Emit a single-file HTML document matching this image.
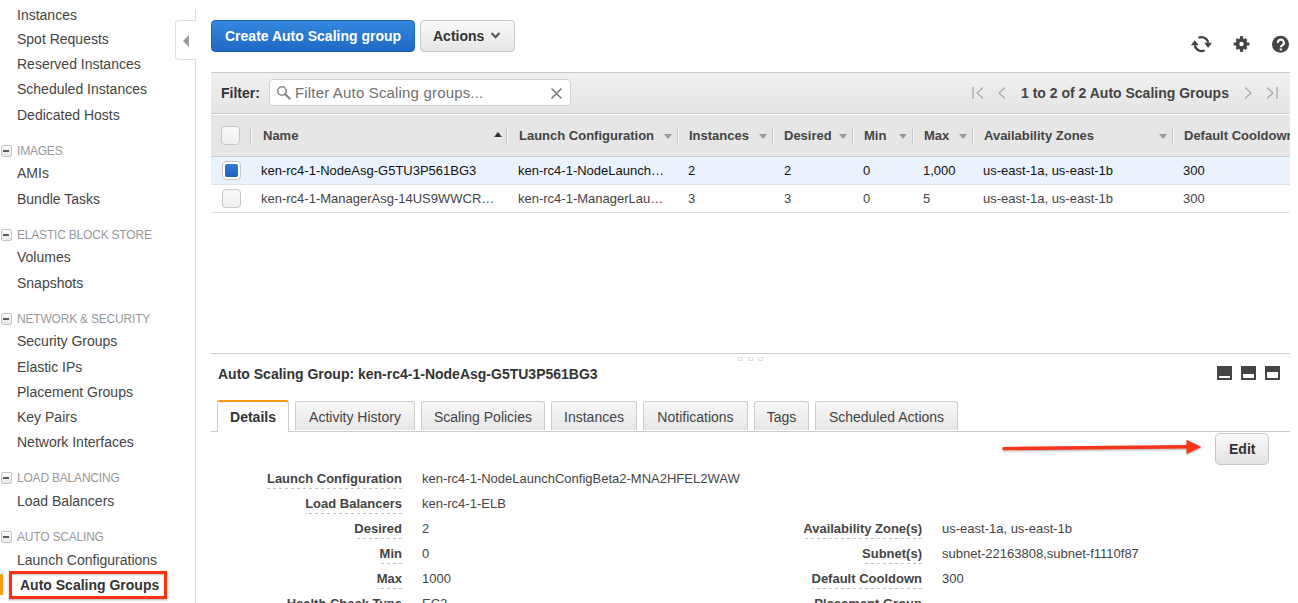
<!DOCTYPE html>
<html><head><meta charset="utf-8">
<style>
*{box-sizing:border-box;margin:0;padding:0}
html,body{width:1298px;height:603px;overflow:hidden;background:#fff}
body{position:relative;font-family:"Liberation Sans",sans-serif;color:#444;font-size:14px}
.a{position:absolute;white-space:nowrap}
.nav{font-size:14px;color:#444;left:17px;line-height:16px}
.sec{font-size:12px;letter-spacing:-0.2px;color:#999;left:17px;line-height:14px}
.mi{position:absolute;left:1px;width:11px;height:12px;border:1px solid #c4c4c4;border-radius:2px;background:linear-gradient(#fdfdfd,#e9e9e9)}
.mi:after{content:"";position:absolute;left:1px;top:3.5px;width:6px;height:2px;background:#5c5c5c}
.th{top:128px;font-size:13px;font-weight:bold;color:#444;line-height:16px}
.td{font-size:13px;color:#444;line-height:16px}
.dot{top:357px;width:5px;height:4px;border:1px solid #ddd;border-top-color:#e6e6e6;border-radius:2px 2px 0 0}
.tab{top:401px;height:29px;border:1px solid #cdcdcd;border-bottom:none;border-radius:3px 3px 0 0;background:linear-gradient(#f8f8f8,#e6e6e6);font-size:14px;color:#444;text-align:center;line-height:30px}
.tab.act{top:400px;height:32px;background:#fff;border-top:2px solid #f7981d;font-weight:bold;color:#333;line-height:30px;z-index:2}
.lbl{font-size:13px;font-weight:bold;color:#444;line-height:16px;padding-bottom:2px}
.lbl:after{content:"";position:absolute;left:0;right:0;bottom:0;height:1px;background:repeating-linear-gradient(to left,#c4c4c4 0 3px,transparent 3px 6px)}
.val{font-size:13px;color:#444;line-height:16px}
</style></head>
<body>
<!-- sidebar -->
<div class="a nav" style="top:7px">Instances</div>
<div class="a nav" style="top:31px">Spot Requests</div>
<div class="a nav" style="top:56px">Reserved Instances</div>
<div class="a nav" style="top:81px">Scheduled Instances</div>
<div class="a nav" style="top:107px">Dedicated Hosts</div>
<div class="mi" style="top:145px"></div><div class="a sec" style="top:144px">IMAGES</div>
<div class="a nav" style="top:165px">AMIs</div>
<div class="a nav" style="top:191px">Bundle Tasks</div>
<div class="mi" style="top:229px"></div><div class="a sec" style="top:228px">ELASTIC BLOCK STORE</div>
<div class="a nav" style="top:249px">Volumes</div>
<div class="a nav" style="top:275px">Snapshots</div>
<div class="mi" style="top:313px"></div><div class="a sec" style="top:312px">NETWORK &amp; SECURITY</div>
<div class="a nav" style="top:333px">Security Groups</div>
<div class="a nav" style="top:359px">Elastic IPs</div>
<div class="a nav" style="top:384px">Placement Groups</div>
<div class="a nav" style="top:409px">Key Pairs</div>
<div class="a nav" style="top:434px">Network Interfaces</div>
<div class="mi" style="top:472px"></div><div class="a sec" style="top:471px">LOAD BALANCING</div>
<div class="a nav" style="top:493px">Load Balancers</div>
<div class="mi" style="top:531px"></div><div class="a sec" style="top:530px">AUTO SCALING</div>
<div class="a nav" style="top:552px">Launch Configurations</div>
<div class="a" style="left:0;top:574px;width:3px;height:21px;background:#f99a14"></div>
<div class="a" style="left:9px;top:571px;width:158px;height:28px;border:3px solid #fb3313;box-shadow:0 1px 2px rgba(0,0,0,.3),inset 0 1px 2px rgba(0,0,0,.25)"></div>
<div class="a nav" style="top:577px;left:20px;font-weight:bold;color:#333">Auto Scaling Groups</div>
<!-- sidebar border + tab -->
<div class="a" style="left:195px;top:10px;width:1px;height:593px;background:#ddd"></div>
<div class="a" style="left:175px;top:20px;width:21px;height:40px;border:1px solid #ddd;border-right:none;border-radius:4px 0 0 4px;background:#fff"></div>
<div class="a" style="left:183px;top:34.5px;width:0;height:0;border-top:6px solid transparent;border-bottom:6px solid transparent;border-right:6px solid #999"></div>


<!-- top right icons -->
<svg class="a" style="left:1180px;top:28px" width="118" height="32" viewBox="1180 28 118 32">
<g fill="none" stroke="#444" stroke-width="2.3">
<path d="M1198.4 37.8 A6.8 6.8 0 0 1 1208.1 42.6"/>
<path d="M1204.6 50.3 A6.8 6.8 0 0 1 1194.8 45.3"/>
</g>
<g fill="#444">
<path d="M1204.2 42.8 L1212 42.8 L1208.1 47.9 Z"/>
<path d="M1190.9 45.2 L1198.7 45.2 L1194.8 40.2 Z"/>
</g>
<g fill="#444">
<circle cx="1241.5" cy="44" r="5.8"/>
<rect x="1240.0" y="36.1" width="3.0" height="4.9" transform="rotate(0 1241.5 44)"/><rect x="1240.15" y="36.9" width="2.7" height="4.1" transform="rotate(45 1241.5 44)"/><rect x="1240.0" y="36.1" width="3.0" height="4.9" transform="rotate(90 1241.5 44)"/><rect x="1240.15" y="36.9" width="2.7" height="4.1" transform="rotate(135 1241.5 44)"/><rect x="1240.0" y="36.1" width="3.0" height="4.9" transform="rotate(180 1241.5 44)"/><rect x="1240.15" y="36.9" width="2.7" height="4.1" transform="rotate(225 1241.5 44)"/><rect x="1240.0" y="36.1" width="3.0" height="4.9" transform="rotate(270 1241.5 44)"/><rect x="1240.15" y="36.9" width="2.7" height="4.1" transform="rotate(315 1241.5 44)"/>
</g>
<circle cx="1241.5" cy="44" r="2.2" fill="#fff"/>
<circle cx="1280.5" cy="44.3" r="8.5" fill="#444"/>
<path d="M1277.9 42.9 A3 3 0 1 1 1282.6 45.1 Q1280.9 45.9 1280.9 47.2" fill="none" stroke="#fff" stroke-width="2.1"/><rect x="1279.7" y="48.5" width="2.4" height="1.9" fill="#fff"/>
</svg>
<!-- top buttons -->
<div class="a" style="left:211px;top:20px;width:204px;height:32px;border:1px solid #1c62b9;border-radius:4px;background:linear-gradient(#3488de,#1d69c4)"></div>
<div class="a" style="left:225px;top:28px;font-size:14px;font-weight:bold;color:#fff;line-height:17px">Create Auto Scaling group</div>
<div class="a" style="left:420px;top:20px;width:95px;height:32px;border:1px solid #c6c6c6;border-radius:4px;background:linear-gradient(#f9f9f9,#e6e6e6)"></div>
<div class="a" style="left:433px;top:28px;font-size:14px;font-weight:bold;color:#333;line-height:17px">Actions</div>
<svg class="a" style="left:490px;top:31px" width="11" height="9" viewBox="0 0 11 9"><path d="M1.6 2 L5.5 6.3 L9.4 2" fill="none" stroke="#555" stroke-width="2.1"/></svg>

<!-- filter bar -->
<div class="a" style="left:211px;top:72px;width:1079px;height:42px;border-top:1px solid #c9c9c9;border-bottom:1px solid #c9c9c9;background:linear-gradient(#f0f0f0,#e4e4e4)"></div>
<div class="a" style="left:221px;top:85px;font-size:14px;font-weight:bold;color:#333;line-height:17px">Filter:</div>
<div class="a" style="left:269px;top:79px;width:302px;height:27px;border:1px solid #d2d2d2;border-radius:4px;background:#fff"></div>
<svg class="a" style="left:276px;top:85px" width="15" height="15" viewBox="0 0 15 15"><circle cx="6" cy="6" r="4.3" fill="none" stroke="#8a8a8a" stroke-width="1.6"/><path d="M9.2 9.2 L13.5 13.5" stroke="#8a8a8a" stroke-width="2.4" stroke-linecap="round"/></svg>
<div class="a" style="left:295px;top:84px;font-size:15px;letter-spacing:0.17px;color:#707070;line-height:18px">Filter Auto Scaling groups...</div>
<svg class="a" style="left:550px;top:87px" width="13" height="13" viewBox="0 0 13 13"><path d="M1.5 1.5 L11.5 11.5 M11.5 1.5 L1.5 11.5" stroke="#777" stroke-width="1.5"/></svg>
<!-- pagination -->
<svg class="a" style="left:972px;top:86px" width="13" height="14" viewBox="0 0 13 14"><path d="M1 1 V13 M11 1.5 L5 7 L11 12.5" fill="none" stroke="#aaa" stroke-width="1.3"/></svg>
<svg class="a" style="left:997px;top:86px" width="10" height="14" viewBox="0 0 10 14"><path d="M8 1.5 L2 7 L8 12.5" fill="none" stroke="#aaa" stroke-width="1.3"/></svg>
<div class="a" style="left:1021px;top:85px;font-size:14px;font-weight:bold;color:#444;line-height:17px">1 to 2 of 2 Auto Scaling Groups</div>
<svg class="a" style="left:1243px;top:86px" width="10" height="14" viewBox="0 0 10 14"><path d="M2 1.5 L8 7 L2 12.5" fill="none" stroke="#aaa" stroke-width="1.3"/></svg>
<svg class="a" style="left:1265px;top:86px" width="13" height="14" viewBox="0 0 13 14"><path d="M12 1 V13 M2 1.5 L8 7 L2 12.5" fill="none" stroke="#aaa" stroke-width="1.3"/></svg>
<!-- table header -->
<div class="a" style="left:211px;top:115px;width:1079px;height:42px;background:#e6e6e6;border-bottom:1px solid #cfcfcf"></div>
<div class="a" style="left:211px;top:157px;width:1079px;height:28px;background:#eaf2fc;border-bottom:1px solid #dde3ea"></div>
<div class="a" style="left:211px;top:185px;width:1079px;height:28px;background:#fff;border-bottom:1px solid #e2e2e2"></div>
<div class="a" style="left:221px;top:126px;width:19px;height:19px;border:1px solid #c6c6c6;border-radius:4px;background:linear-gradient(#fafafa,#efefef)"></div>
<div class="a" style="left:222px;top:161px;width:19px;height:19px;border:1px solid #c6c6c6;border-radius:4px;background:#fff"></div>
<div class="a" style="left:225px;top:164px;width:13px;height:13px;border-radius:2px;background:linear-gradient(#2f7fd6,#1a60bd)"></div>
<div class="a" style="left:222px;top:189px;width:19px;height:19px;border:1px solid #c6c6c6;border-radius:4px;background:linear-gradient(#fafafa,#f0f0f0)"></div>
<div class="a" style="left:250px;top:127px;width:2px;height:18px;border-left:1px solid #c8c8c8;border-right:1px solid #fafafa"></div>
<div class="a" style="left:506px;top:127px;width:2px;height:18px;border-left:1px solid #c8c8c8;border-right:1px solid #fafafa"></div>
<div class="a" style="left:677px;top:127px;width:2px;height:18px;border-left:1px solid #c8c8c8;border-right:1px solid #fafafa"></div>
<div class="a" style="left:772px;top:127px;width:2px;height:18px;border-left:1px solid #c8c8c8;border-right:1px solid #fafafa"></div>
<div class="a" style="left:852px;top:127px;width:2px;height:18px;border-left:1px solid #c8c8c8;border-right:1px solid #fafafa"></div>
<div class="a" style="left:912px;top:127px;width:2px;height:18px;border-left:1px solid #c8c8c8;border-right:1px solid #fafafa"></div>
<div class="a" style="left:972px;top:127px;width:2px;height:18px;border-left:1px solid #c8c8c8;border-right:1px solid #fafafa"></div>
<div class="a" style="left:1172px;top:127px;width:2px;height:18px;border-left:1px solid #c8c8c8;border-right:1px solid #fafafa"></div>
<div class="a th" style="left:263px">Name</div>
<div class="a th" style="left:519px">Launch Configuration</div>
<div class="a th" style="left:689px">Instances</div>
<div class="a th" style="left:784px">Desired</div>
<div class="a th" style="left:864px">Min</div>
<div class="a th" style="left:924px">Max</div>
<div class="a th" style="left:984px">Availability Zones</div>
<div class="a" style="left:1184px;top:115px;width:106px;height:40px;overflow:hidden"><div class="a th" style="left:0;top:13px">Default Cooldown</div></div>
<div class="a" style="left:494px;top:132px;width:0;height:0;border-left:4px solid transparent;border-right:4px solid transparent;border-bottom:5px solid #333"></div>
<div class="a" style="left:664px;top:134px;width:0;height:0;border-left:4px solid transparent;border-right:4px solid transparent;border-top:5px solid #999"></div>
<div class="a" style="left:759px;top:134px;width:0;height:0;border-left:4px solid transparent;border-right:4px solid transparent;border-top:5px solid #999"></div>
<div class="a" style="left:839px;top:134px;width:0;height:0;border-left:4px solid transparent;border-right:4px solid transparent;border-top:5px solid #999"></div>
<div class="a" style="left:899px;top:134px;width:0;height:0;border-left:4px solid transparent;border-right:4px solid transparent;border-top:5px solid #999"></div>
<div class="a" style="left:959px;top:134px;width:0;height:0;border-left:4px solid transparent;border-right:4px solid transparent;border-top:5px solid #999"></div>
<div class="a" style="left:1159px;top:134px;width:0;height:0;border-left:4px solid transparent;border-right:4px solid transparent;border-top:5px solid #999"></div>
<div class="a td" style="left:261px;top:163px;color:#111">ken-rc4-1-NodeAsg-G5TU3P561BG3</div>
<div class="a td" style="left:518px;top:163px;color:#111">ken-rc4-1-NodeLaunch…</div>
<div class="a td" style="left:688px;top:163px;color:#111">2</div>
<div class="a td" style="left:784px;top:163px;color:#111">2</div>
<div class="a td" style="left:863px;top:163px;color:#111">0</div>
<div class="a td" style="left:923px;top:163px;color:#111">1,000</div>
<div class="a td" style="left:983px;top:163px;color:#111">us-east-1a, us-east-1b</div>
<div class="a td" style="left:1183px;top:163px;color:#111">300</div>
<div class="a td" style="left:261px;top:191px">ken-rc4-1-ManagerAsg-14US9WWCR…</div>
<div class="a td" style="left:518px;top:191px">ken-rc4-1-ManagerLau…</div>
<div class="a td" style="left:688px;top:191px">3</div>
<div class="a td" style="left:784px;top:191px">3</div>
<div class="a td" style="left:863px;top:191px">0</div>
<div class="a td" style="left:923px;top:191px">5</div>
<div class="a td" style="left:983px;top:191px">us-east-1a, us-east-1b</div>
<div class="a td" style="left:1183px;top:191px">300</div>

<!-- splitter -->
<div class="a" style="left:211px;top:353px;width:1079px;height:1px;background:#cfcfcf"></div>
<div class="a dot" style="left:738px"></div><div class="a dot" style="left:748px"></div><div class="a dot" style="left:758px"></div>
<div class="a" style="left:218px;top:366px;font-size:14px;font-weight:bold;color:#333;line-height:17px">Auto Scaling Group: ken-rc4-1-NodeAsg-G5TU3P561BG3</div>
<!-- pane icons -->
<div class="a" style="left:1217px;top:366px;width:15px;height:14px;background:#444"><div class="a" style="left:2px;top:10px;width:11px;height:2px;background:#fff"></div></div>
<div class="a" style="left:1241px;top:366px;width:15px;height:14px;background:#444"><div class="a" style="left:2px;top:8px;width:11px;height:4px;background:#fff"></div></div>
<div class="a" style="left:1265px;top:366px;width:15px;height:14px;background:#444"><div class="a" style="left:2px;top:6px;width:11px;height:6px;background:#fff"></div></div>
<!-- tabs -->
<div class="a" style="left:211px;top:431px;width:1079px;height:1px;background:#cacaca"></div>
<div class="a tab act" style="left:217px;width:72px">Details</div>
<div class="a tab" style="left:295px;width:120px">Activity History</div>
<div class="a tab" style="left:421px;width:124px">Scaling Policies</div>
<div class="a tab" style="left:551px;width:86px">Instances</div>
<div class="a tab" style="left:643px;width:105px">Notifications</div>
<div class="a tab" style="left:754px;width:55px">Tags</div>
<div class="a tab" style="left:815px;width:143px">Scheduled Actions</div>
<!-- edit + arrow -->
<div class="a" style="left:1215px;top:433px;width:54px;height:32px;border:1px solid #c6c6c6;border-radius:5px;background:linear-gradient(#f9f9f9,#e4e4e4)"></div>
<div class="a" style="left:1229px;top:441px;font-size:14px;font-weight:bold;color:#333;line-height:17px">Edit</div>
<svg class="a" style="left:995px;top:435px" width="215" height="25" viewBox="995 435 215 25">
<defs><filter id="sh" x="-5%" y="-50%" width="110%" height="200%"><feDropShadow dx="0" dy="1" stdDeviation="0.8" flood-color="#000" flood-opacity="0.35"/></filter></defs>
<g filter="url(#sh)"><path d="M1004 448.6 L1188 446.8" stroke="#f5341b" stroke-width="3.4" stroke-linecap="round"/><path d="M1186.5 439.8 L1201.5 447 L1186.5 454 Z" fill="#f5341b"/></g>
</svg>
<!-- details -->
<div class="a lbl" style="right:896px;top:471px">Launch Configuration</div><div class="a val" style="left:422px;top:471px">ken-rc4-1-NodeLaunchConfigBeta2-MNA2HFEL2WAW</div>
<div class="a lbl" style="right:896px;top:496px">Load Balancers</div><div class="a val" style="left:422px;top:496px">ken-rc4-1-ELB</div>
<div class="a lbl" style="right:896px;top:521px">Desired</div><div class="a val" style="left:422px;top:521px">2</div>
<div class="a lbl" style="right:896px;top:546px">Min</div><div class="a val" style="left:422px;top:546px">0</div>
<div class="a lbl" style="right:896px;top:571px">Max</div><div class="a val" style="left:422px;top:571px">1000</div>
<div class="a lbl" style="right:896px;top:596px">Health Check Type</div><div class="a val" style="left:422px;top:596px">EC2</div>
<div class="a lbl" style="right:376px;top:521px">Availability Zone(s)</div><div class="a val" style="left:942px;top:521px">us-east-1a, us-east-1b</div>
<div class="a lbl" style="right:376px;top:546px">Subnet(s)</div><div class="a val" style="left:942px;top:546px">subnet-22163808,subnet-f1110f87</div>
<div class="a lbl" style="right:376px;top:571px">Default Cooldown</div><div class="a val" style="left:942px;top:571px">300</div>
<div class="a lbl" style="right:376px;top:596px">Placement Group</div><div class="a val" style="left:942px;top:596px"></div>
</body></html>
